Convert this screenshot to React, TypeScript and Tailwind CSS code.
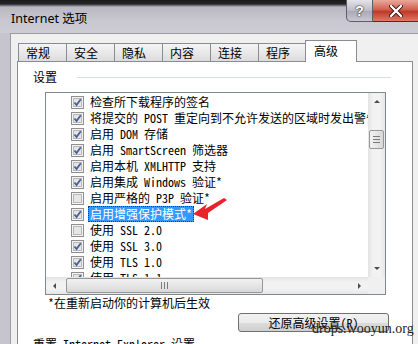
import React from 'react';

const dlgFont = { fontFamily: '"Noto Sans Mono CJK SC", "Noto Sans CJK SC", monospace' };

const rows: { label: string; checked: boolean; selected?: boolean }[] = [
  { label: '检查所下载程序的签名', checked: true },
  { label: '将提交的 POST 重定向到不允许发送的区域时发出警告', checked: true },
  { label: '启用 DOM 存储', checked: true },
  { label: '启用 SmartScreen 筛选器', checked: true },
  { label: '启用本机 XMLHTTP 支持', checked: true },
  { label: '启用集成 Windows 验证*', checked: true },
  { label: '启用严格的 P3P 验证*', checked: false },
  { label: '启用增强保护模式*', checked: true, selected: true },
  { label: '使用 SSL 2.0', checked: false },
  { label: '使用 SSL 3.0', checked: true },
  { label: '使用 TLS 1.0', checked: true },
  { label: '使用 TLS 1.1', checked: true },
];

const tabs = ['常规', '安全', '隐私', '内容', '连接', '程序'];

function CheckBox({ checked }: { checked: boolean }) {
  return (
    <svg width="13" height="13" viewBox="0 0 13 13" className="shrink-0">
      <rect x="0.5" y="0.5" width="12" height="12" fill="#f4f4f4" stroke="#8e8f8f" />
      <rect x="2.5" y="2.5" width="8" height="8" fill="#e6e6e6" stroke="#b8b8b8" />
      {checked && (
        <path d="M3.5 6.5 L5.5 9 L9.8 3.2" fill="none" stroke="#4a5f97" strokeWidth="1.8" />
      )}
    </svg>
  );
}

function Arrow({ dir }: { dir: 'up' | 'down' | 'left' | 'right' }) {
  const d = {
    up: 'M1 5 L4 2 L7 5 Z',
    down: 'M1 2 L4 5 L7 2 Z',
    left: 'M5 1 L2 4 L5 7 Z',
    right: 'M2 1 L5 4 L2 7 Z',
  }[dir];
  return (
    <svg width="8" height="8" viewBox="0 0 8 8">
      <path d={d} fill="#4d4d4d" />
    </svg>
  );
}

export default function App() {
  return (
    <div className="relative w-[418px] h-[344px] overflow-hidden bg-[#c6c4cc]" style={dlgFont}>
      {/* title bar */}
      <div className="h-[33px] pl-[11px] pt-[11px] bg-[linear-gradient(to_bottom,#1b1b1d_0px,#26262a_4px,#b9b7bf_7px,#c8c6ce_60%,#cfcdd4_100%)]">
        <div
          className="text-[12.5px] leading-[16px] text-black"
          style={{ fontFamily: '"Noto Sans", "Noto Sans CJK SC", sans-serif' }}
        >
          Internet 选项
        </div>
      </div>

      {/* caption buttons */}
      <div className="absolute top-0 right-0 flex">
        <div className="w-[27px] h-[22px] rounded-bl-[5px] border border-t-0 border-[#5e5e66] bg-[linear-gradient(to_bottom,#e6e4ea,#bdbbc4_50%,#a9a7b1_51%,#c9c7d1)] flex items-center justify-center">
          <span className="text-[14px] font-bold text-white leading-none [text-shadow:0_0_2px_#222,0_0_1px_#222]" style={{ fontFamily: '"Liberation Sans", sans-serif' }}>?</span>
        </div>
        <div className="w-[45px] h-[22px] border-b border-[#6b2020] bg-[linear-gradient(to_bottom,#e9a99c,#d2614f_45%,#c0392a_55%,#dc7a64)] flex items-center justify-center">
          <svg width="14" height="12" viewBox="0 0 14 12">
            <path d="M2 1 L12 11 M12 1 L2 11" stroke="#3a1010" strokeWidth="4" strokeLinecap="round" />
            <path d="M2 1 L12 11 M12 1 L2 11" stroke="#ffffff" strokeWidth="2.4" strokeLinecap="round" />
          </svg>
        </div>
      </div>

      {/* client area */}
      <div className="ml-[10px] h-[311px] bg-[#f0f0f0] border-t border-l border-[#9c9aa3] pt-[6px]">
        {/* tabs */}
        <div className="flex items-end h-[21px] pl-[7px] relative z-10">
          {tabs.map((t, i) => (
            <div
              key={t}
              className={`w-[49px] h-[18px] border border-b-0 border-[#898c95] bg-[linear-gradient(to_bottom,#f4f4f4,#e9e9e9_50%,#dcdcdc)] pl-[7px] text-[12px] leading-[17px] text-black ${i > 0 ? '-ml-px' : ''}`}
            >
              {t}
            </div>
          ))}
          <div className="-ml-[2px] w-[52px] h-[22px] -mb-px border border-b-0 border-[#898c95] bg-white pl-[8px] pt-[2px] text-[12px] leading-[16px] text-black">
            高级
          </div>
        </div>

        {/* panel */}
        <div className="ml-[6px] w-[396px] h-[300px] border border-[#898c95] bg-white">
          <div className="flex items-center h-4 mt-[7px] pl-[15px]">
            <span className="text-[12px] leading-4">设置</span>
            <div className="ml-[20px] w-[314px] h-px bg-[#d5dfe5]" />
          </div>

          {/* list box */}
          <div className="ml-[27px] mt-[7px] w-[341px] h-[203px] border border-[#828790] grid grid-cols-[322px_17px] grid-rows-[184px_17px]">
            <div className="overflow-hidden pt-px">
              {rows.map((r) => (
                <div key={r.label} className="flex items-center h-4 pl-[25px] gap-[4px] whitespace-nowrap">
                  <CheckBox checked={r.checked} />
                  <span
                    className={`px-[2px] h-4 text-[12px] leading-[16px] ${
                      r.selected
                        ? 'bg-[#3399ff] text-white outline-1 outline-dotted outline-[#1b3f6b] -outline-offset-1'
                        : 'text-black'
                    }`}
                  >
                    {r.label}
                  </span>
                </div>
              ))}
            </div>

            {/* vertical scrollbar */}
            <div className="flex flex-col items-center bg-[linear-gradient(to_right,#e3e3e3,#f2f2f2_30%,#f2f2f2_70%,#e6e6e6)]">
              <div className="h-[17px] flex items-center justify-center">
                <Arrow dir="up" />
              </div>
              <div className="mt-[20px] w-[15px] h-[19px] rounded-[2px] border border-[#979797] bg-[linear-gradient(to_right,#f1f1f1,#e6e6e6_50%,#d8d8d8)] flex flex-col items-center justify-center gap-[2px]">
                <div className="w-[7px] h-px bg-[#7a7a7a]" />
                <div className="w-[7px] h-px bg-[#7a7a7a]" />
                <div className="w-[7px] h-px bg-[#7a7a7a]" />
              </div>
              <div className="flex-1" />
              <div className="h-[17px] flex items-center justify-center">
                <Arrow dir="down" />
              </div>
            </div>

            {/* horizontal scrollbar */}
            <div className="flex items-center bg-[linear-gradient(to_bottom,#e3e3e3,#f2f2f2_30%,#f2f2f2_70%,#e6e6e6)]">
              <div className="w-[17px] flex items-center justify-center">
                <Arrow dir="left" />
              </div>
              <div className="ml-[3px] w-[197px] h-[15px] rounded-[2px] border border-[#979797] bg-[linear-gradient(to_bottom,#f1f1f1,#e6e6e6_50%,#d8d8d8)] flex items-center justify-center gap-[2px]">
                <div className="w-px h-[7px] bg-[#7a7a7a]" />
                <div className="w-px h-[7px] bg-[#7a7a7a]" />
                <div className="w-px h-[7px] bg-[#7a7a7a]" />
              </div>
              <div className="flex-1" />
              <div className="w-[17px] flex items-center justify-center">
                <Arrow dir="right" />
              </div>
            </div>
            <div className="bg-[#f0f0f0]" />
          </div>

          <div className="pl-[30px] h-4 text-[12px] leading-4">*在重新启动你的计算机后生效</div>

          <div className="ml-[220px] mt-[2px] w-[151px] h-[19px] rounded-[3px] border border-[#707070] bg-[linear-gradient(to_bottom,#f2f2f2,#ebebeb_50%,#dddddd_50%,#cfcfcf)] flex items-center justify-center text-[12px] leading-4">
            还原高级设置(R)
          </div>

          <div className="flex items-center h-4 mt-[4px] pl-[15px]">
            <span className="text-[12px] leading-4 whitespace-nowrap">重置 Internet Explorer 设置</span>
            <div className="ml-[2px] w-[200px] h-px bg-[#d5dfe5]" />
          </div>
        </div>
      </div>

      {/* red arrow annotation */}
      <svg className="absolute left-0 top-0 pointer-events-none" width="418" height="344">
        <polygon
          points="193,214 207,204 205,209 224,198 227,200 208,213 208,220"
          fill="#e8232a"
        />
      </svg>

      {/* watermark */}
      <div
        className="absolute left-[312px] top-[320px] text-[14px] leading-[17px] text-[#1e1e1e]"
        style={{ fontFamily: '"Liberation Serif", serif' }}
      >
        drops.wooyun.org
      </div>
    </div>
  );
}
